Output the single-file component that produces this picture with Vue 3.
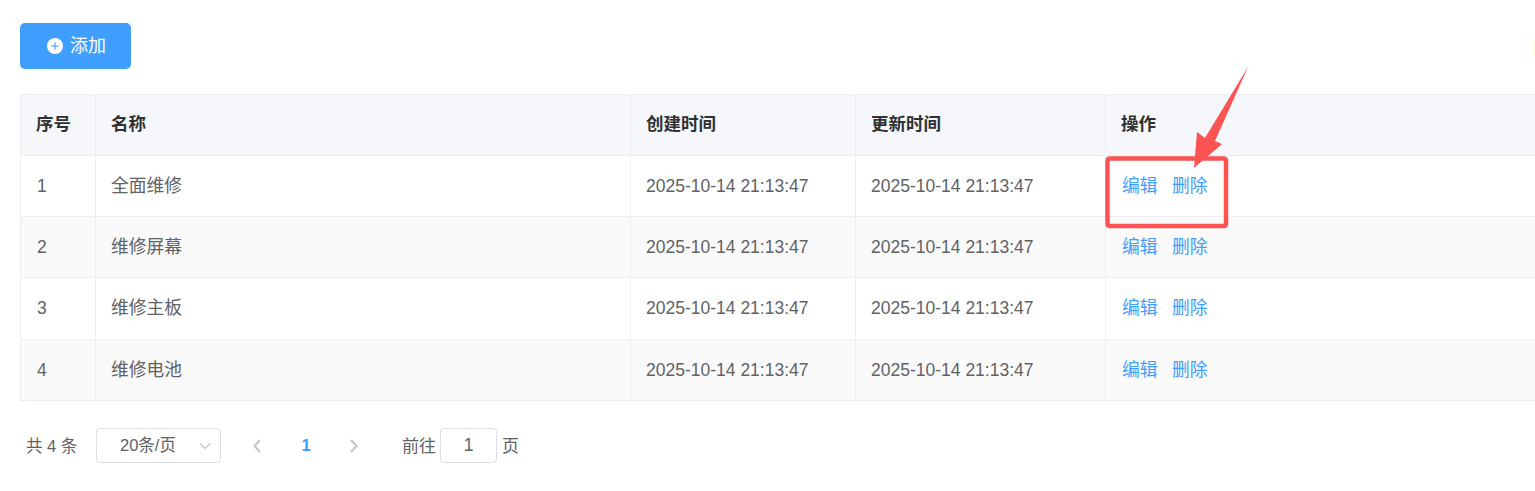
<template>
  <div class="page">
    <div class="toolbar">
      <button class="add-btn">
        <svg class="plus" viewBox="0 0 16 16" width="16" height="16">
          <circle cx="8" cy="8" r="8" fill="#fff" />
          <path d="M8 4.2v7.6M4.2 8h7.6" stroke="#409eff" stroke-width="1.1" />
        </svg>
        <span class="btn-text">添加</span>
      </button>
    </div>

    <div class="table-wrap">
      <table class="table">
        <colgroup>
          <col style="width: 75px" />
          <col style="width: 535px" />
          <col style="width: 225px" />
          <col style="width: 250px" />
          <col />
        </colgroup>
        <thead>
          <tr>
            <th v-for="h in headers" :key="h">{{ h }}</th>
          </tr>
        </thead>
        <tbody>
          <tr v-for="(row, i) in rows" :key="row.id" :class="{ striped: i % 2 === 1, tall: i === 2 }">
            <td class="num">{{ row.id }}</td>
            <td class="cjk">{{ row.name }}</td>
            <td>{{ stamp }}</td>
            <td>{{ stamp }}</td>
            <td class="cjk">
              <div class="actions">
                <a class="link">编辑</a>
                <a class="link">删除</a>
              </div>
            </td>
          </tr>
        </tbody>
      </table>
    </div>

    <div class="pager">
      <span class="total">共 4 条</span>
      <div class="size-select">
        <span>20条/页</span>
        <svg class="caret" viewBox="0 0 12 8" width="12" height="8">
          <path d="M1 1.5l5 5 5-5" fill="none" stroke="#c0c4cc" stroke-width="1.1" />
        </svg>
      </div>
      <svg class="chevron prev" viewBox="0 0 8 14" width="8" height="14">
        <path d="M7 1L1.5 7 7 13" fill="none" stroke="#c0c4cc" stroke-width="2" />
      </svg>
      <span class="current">1</span>
      <svg class="chevron next" viewBox="0 0 8 14" width="8" height="14">
        <path d="M1 1l5.500 6L1 13" fill="none" stroke="#c0c4cc" stroke-width="2" />
      </svg>
      <span class="goto">前往</span>
      <div class="page-input">1</div>
      <span class="suffix">页</span>
    </div>

    <!-- 标注 -->
    <svg class="annotation" width="1535" height="491" viewBox="0 0 1535 491">
      <rect x="1107.500" y="158.500" width="118.500" height="67.500" rx="2" fill="none" stroke="#fd5353" stroke-width="4.500" />
      <path d="M1248 67L1205 138L1197 132L1194 168L1222 144L1215 141Z" fill="#fd5353" />
    </svg>
    <div class="edge-mark"></div>
  </div>
</template>

<script setup>
const headers = ['序号', '名称', '创建时间', '更新时间', '操作']
const stamp = '2025-10-14 21:13:47'
const rows = [
  { id: 1, name: '全面维修' },
  { id: 2, name: '维修屏幕' },
  { id: 3, name: '维修主板' },
  { id: 4, name: '维修电池' }
]
</script>

<style>
html, body {
  margin: 0;
  background: #fff;
  overflow: hidden;
}
</style>

<style scoped>
.page {
  position: relative;
  width: 1535px;
  height: 491px;
  overflow: hidden;
  box-sizing: border-box;
  padding: 23px 0 0 20px;
  background: #fff;
  font-family: "Liberation Sans", "Noto Sans CJK SC", sans-serif;
  font-size: 17.500px;
  color: #606266;
}

.toolbar {
  height: 46px;
  margin-bottom: 25px;
}

.add-btn {
  display: flex;
  align-items: center;
  gap: 7px;
  width: 111px;
  height: 46px;
  padding: 0 0 0 27px;
  border: none;
  border-radius: 5px;
  background: #409eff;
  color: #fff;
  font: inherit;
}

.btn-text {
  font-size: 18px;
  padding-bottom: 4px;
}

.table-wrap {
  width: 1600px;
}

.table {
  width: 100%;
  table-layout: fixed;
  border-collapse: separate;
  border-spacing: 0;
  border-top: 1px solid #ebeef5;
  border-left: 1px solid #ebeef5;
}

th,
td {
  box-sizing: border-box;
  height: 61px;
  padding: 0 15px;
  text-align: left;
  border-right: 1px solid #ebeef5;
  border-bottom: 1px solid #ebeef5;
}

.tall td {
  height: 62px;
}

th {
  padding-bottom: 5px;
  background: #f5f7fa;
  color: #303133;
  font-weight: 700;
}

td.num {
  padding-left: 16px;
}

td.cjk {
  padding-bottom: 4px;
  font-size: 17.750px;
}

.tall td.cjk {
  padding-bottom: 5px;
}

.striped td {
  background: #fafafa;
}

.actions {
  display: flex;
  gap: 14.500px;
  padding-left: 1px;
}

.link {
  color: #409eff;
}

.pager {
  display: flex;
  align-items: center;
  height: 35px;
  margin-top: 27px;
  font-size: 16.500px;
}

.total {
  margin-left: 6px;
  width: 70px;
  padding-bottom: 2px;
}

.size-select {
  position: relative;
  box-sizing: border-box;
  width: 125px;
  height: 35px;
  padding-left: 23px;
  line-height: 33px;
  border: 1px solid #dcdfe6;
  border-radius: 4px;
}

.caret {
  position: absolute;
  right: 9px;
  top: 13px;
}

.chevron {
  flex: none;
}

.prev {
  margin-left: 32px;
}

.current {
  width: 24px;
  margin-left: 37px;
  color: #409eff;
  font-weight: 700;
  text-align: center;
  box-sizing: border-box;
  padding-right: 8px;
}

.next {
  margin-left: 28px;
}

.goto {
  margin-left: 44px;
  font-size: 17px;
  padding-bottom: 2px;
}

.page-input {
  box-sizing: border-box;
  width: 57px;
  height: 35px;
  margin-left: 4px;
  font-size: 17.500px;
  line-height: 33px;
  text-align: center;
  border: 1px solid #dcdfe6;
  border-radius: 4px;
}

.suffix {
  margin-left: 5px;
  font-size: 17px;
  padding-bottom: 2px;
}

.annotation {
  position: absolute;
  left: 0;
  top: 0;
  pointer-events: none;
}

.edge-mark {
  position: absolute;
  left: 1534px;
  top: 40px;
  width: 1px;
  height: 15px;
  background: #fdfdd0;
}
</style>
